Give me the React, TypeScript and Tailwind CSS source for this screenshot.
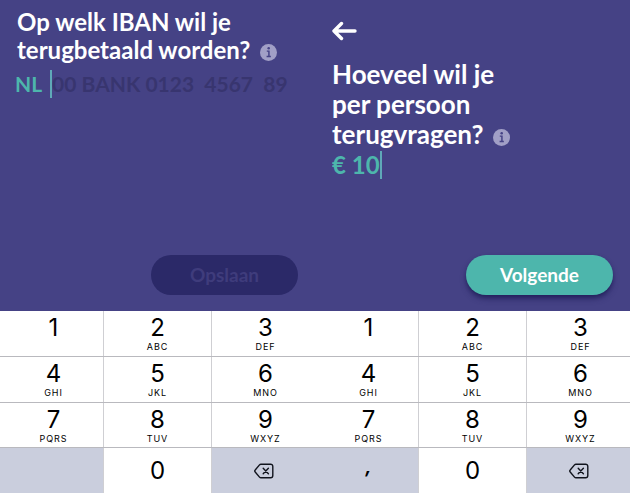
import type { ReactNode } from 'react';

const keys = [
    { digit: '1', letters: '' },
    { digit: '2', letters: 'ABC' },
    { digit: '3', letters: 'DEF' },
    { digit: '4', letters: 'GHI' },
    { digit: '5', letters: 'JKL' },
    { digit: '6', letters: 'MNO' },
    { digit: '7', letters: 'PQRS' },
    { digit: '8', letters: 'TUV' },
    { digit: '9', letters: 'WXYZ' }
];

const InfoButton = () => (
    <button type="button" aria-label="Meer informatie" className="ml-[10px] inline-block align-middle">
        <svg width="17" height="17" viewBox="0 0 16 16" className="block">
            <circle cx="8" cy="8" r="8" fill="#a19fc6" />
            <circle cx="8.2" cy="4" r="1.2" fill="#454285" />
            <path d="M6.4 6.7h2v4.6M6.2 11.8h4" fill="none" stroke="#454285" strokeWidth="1.4" />
        </svg>
    </button>
);

const BackspaceIcon = () => (
    <svg width="20" height="16" viewBox="0 0 20 16" fill="none" stroke="#10131c" strokeWidth="1.4" strokeLinecap="round" strokeLinejoin="round">
        <path d="M7 1.2h9.6a2.2 2.2 0 0 1 2.2 2.2v9.2a2.2 2.2 0 0 1-2.2 2.2H7a2 2 0 0 1-1.5-.7L1.2 9a1.5 1.5 0 0 1 0-2l4.3-5.1A2 2 0 0 1 7 1.2z" />
        <path d="M9.2 5.3l5.2 5.4M14.4 5.3l-5.2 5.4" />
    </svg>
);

const Caret = () => <span aria-hidden="true" className="h-7 w-[2px] shrink-0 bg-[#5fa9b8]"></span>;

const Keypad = ({ comma = false }: { comma?: boolean }) => (
    <div className="grid h-[182px] grid-cols-[103fr_109fr_103fr] grid-rows-4 gap-y-px bg-[#b9b9be] font-['Inter',sans-serif] text-black">
        {keys.map((key, i) => (
            <button
                key={key.digit}
                type="button"
                className={`flex flex-col items-center bg-white pt-[3px] ${i % 3 === 1 ? 'border-x border-[#cfcfd3]' : 'pl-1'}`}
            >
                <span className="text-2xl leading-7">{key.digit}</span>
                <span className="text-[9px] leading-[10px] tracking-widest">{key.letters}</span>
            </button>
        ))}
        {comma ? (
            <button type="button" className="flex items-center justify-center bg-[#cacedd] pb-2 pl-1 text-lg leading-7 font-bold italic">,</button>
        ) : (
            <div className="bg-[#cacedd]"></div>
        )}
        <button type="button" className="flex items-center justify-center border-x border-[#cfcfd3] bg-white text-2xl leading-7">0</button>
        <button type="button" aria-label="Wissen" className="flex items-center justify-center bg-[#cacedd]">
            <BackspaceIcon />
        </button>
    </div>
);

const Screen = ({ children, action, comma }: { children: ReactNode; action: ReactNode; comma?: boolean }) => (
    <section className="flex min-h-screen flex-col">
        <div className="flex flex-1 flex-col pb-4">
            {children}
            <div className="mt-auto flex justify-end px-[17px]">{action}</div>
        </div>
        <Keypad comma={comma} />
    </section>
);

export default function App() {
    return (
        <main className="grid min-h-screen grid-cols-2 bg-[#454285] font-['Lato',sans-serif] text-white">
            <Screen
                action={
                    <button type="button" disabled className="h-10 w-[147px] rounded-full bg-[#2b2968] text-[19px] font-bold text-[#3f3c7c]">
                        Opslaan
                    </button>
                }
            >
                <label htmlFor="iban" className="px-[17px] pt-2 text-2xl leading-7 font-bold">
                    Op welk IBAN wil je
                    <br />
                    terugbetaald worden?
                    <InfoButton />
                </label>
                <div className="mt-1 flex items-center px-[15px] text-[21px] leading-8 font-bold">
                    <span className="mr-2 text-[#4db6ac]">NL</span>
                    <Caret />
                    <input
                        id="iban"
                        type="text"
                        placeholder="00 BANK 0123  4567  89"
                        className="min-w-0 flex-1 bg-transparent outline-none placeholder:text-[#38356f]"
                    />
                </div>
            </Screen>

            <Screen
                comma
                action={
                    <button type="button" className="h-10 w-[147px] rounded-full bg-[#4db6ac] text-[19px] font-bold shadow-md shadow-[#23205c]">
                        Volgende
                    </button>
                }
            >
                <button type="button" aria-label="Terug" className="mt-[21px] self-start px-[17px]">
                    <svg width="26" height="20" viewBox="0 0 26 20" fill="none" stroke="white" strokeWidth="3.4" strokeLinecap="round" strokeLinejoin="round" className="block">
                        <path d="M2 10h21M9.500 2.500L2 10l7.500 7.500" />
                    </svg>
                </button>
                <label htmlFor="bedrag" className="mt-[18px] px-[17px] text-[26px] leading-[30px] font-bold">
                    Hoeveel wil je
                    <br />
                    per persoon
                    <br />
                    terugvragen?
                    <InfoButton />
                </label>
                <div className="flex items-center px-[17px] text-2xl leading-8 font-bold text-[#4db6ac]">
                    <input id="bedrag" type="text" defaultValue="€ 10" className="bg-transparent outline-none [field-sizing:content]" />
                    <Caret />
                </div>
            </Screen>
        </main>
    );
}
